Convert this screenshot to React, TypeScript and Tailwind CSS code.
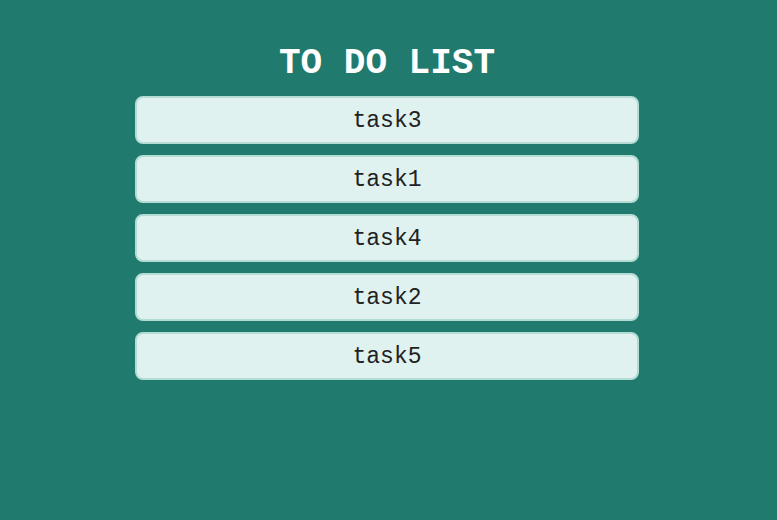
const tasks = ['task3', 'task1', 'task4', 'task2', 'task5']

export default function App() {
  return (
    <div className="min-h-screen bg-[#217a6e] font-['Liberation_Mono','Courier_New',monospace] pt-[42px]">
      <div className="w-[504px] ml-[135px] flex flex-col">
        <h1 className="text-center text-white font-bold text-[36px] leading-[44px] mb-[10px]">
          TO DO LIST
        </h1>
        <ul className="flex flex-col gap-[11px]">
          {tasks.map((task) => (
            <li
              key={task}
              className="h-[48px] pt-[3px] flex items-center justify-center rounded-[8px] border-2 border-[#b3dcd5] bg-[#e0f2f0] text-[#222] text-[23px]"
            >
              {task}
            </li>
          ))}
        </ul>
      </div>
    </div>
  )
}
